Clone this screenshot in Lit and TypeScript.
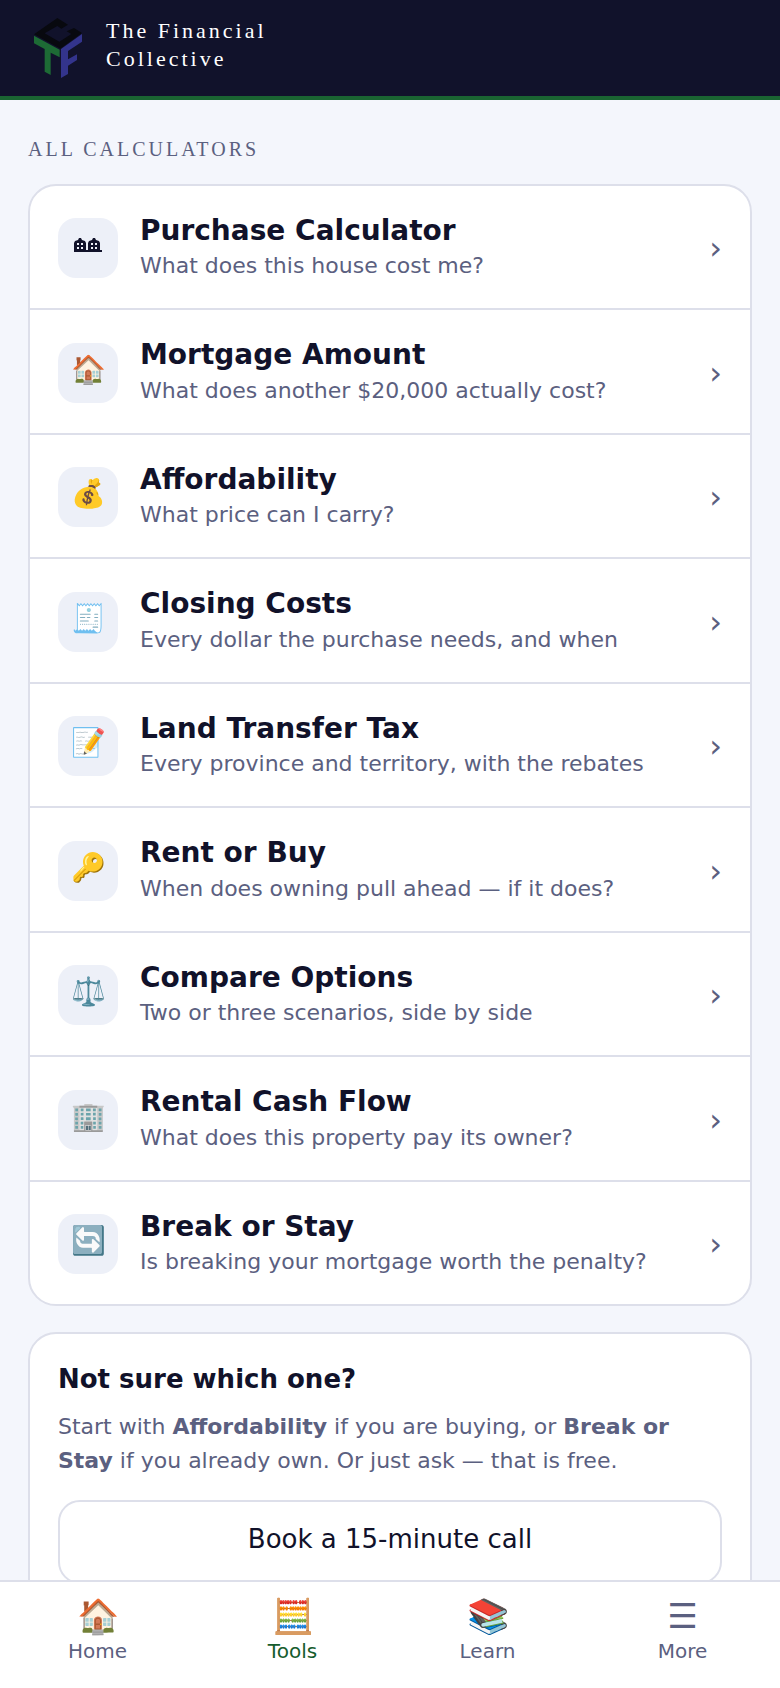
import { LitElement, html, css, nothing } from "lit";
import { customElement } from "lit/decorators.js";

interface Calculator { icon: unknown; title: string; note: string; }

const houses = html`
  <svg class="houses" viewBox="0 0 28 14">
    <path fill="currentColor" fill-rule="evenodd" d="M0 14V5L1 3L4 2L5 0H7L8 2L11 3L12 5V12H14V5L15 3L18 2L19 0H21L22 2L25 3L26 5V12H28V14ZM3 5V7H5V5ZM7 5V7H9V5ZM3 9V11H5V9ZM7 9V11H9V9ZM17 5V7H19V5ZM21 5V7H23V5ZM17 9V11H19V9ZM21 9V11H23V9Z" />
  </svg>`;

const CALCULATORS: Calculator[] = [
  { icon: houses, title: "Purchase Calculator", note: "What does this house cost me?" },
  { icon: "🏠", title: "Mortgage Amount", note: "What does another $20,000 actually cost?" },
  { icon: "💰", title: "Affordability", note: "What price can I carry?" },
  { icon: "🧾", title: "Closing Costs", note: "Every dollar the purchase needs, and when" },
  { icon: "📝", title: "Land Transfer Tax", note: "Every province and territory, with the rebates" },
  { icon: "🔑", title: "Rent or Buy", note: "When does owning pull ahead — if it does?" },
  { icon: "⚖️", title: "Compare Options", note: "Two or three scenarios, side by side" },
  { icon: "🏢", title: "Rental Cash Flow", note: "What does this property pay its owner?" },
  { icon: "🔄", title: "Break or Stay", note: "Is breaking your mortgage worth the penalty?" },
];

const TABS = [
  { icon: "🏠", label: "Home", current: false },
  { icon: "🧮", label: "Tools", current: true },
  { icon: "📚", label: "Learn", current: false },
  { icon: "☰", label: "More", current: false },
];

@customElement("app-root")
export class AppRoot extends LitElement {
  static styles = css`
    :host {
      display: block;
      min-height: 100vh;
      background: #f4f6fc;
      color: #11122a;
      font-family: "DejaVu Sans", sans-serif;
      --line: #dddfea;
      --muted: #5b6080;
      --green: #1a6432;
    }
    * { box-sizing: border-box; }
    a { color: inherit; text-decoration: none; }
    .header {
      display: flex;
      align-items: center;
      gap: 22px;
      height: 100px;
      padding: 0 28px;
      background: #11122b;
      border-bottom: 4px solid var(--green);
    }
    .logo { width: 56px; height: 66px; }
    .brand {
      width: 200px;
      padding-bottom: 6px;
      color: #fff;
      font: 22px/28px "Liberation Serif", serif;
      letter-spacing: 3px;
    }
    .main { padding: 35px 28px 160px; }
    .heading {
      margin: 0 0 21px;
      color: var(--muted);
      font: 20px/28px "Liberation Serif", serif;
      letter-spacing: 3px;
      text-transform: uppercase;
    }
    .card {
      background: #fff;
      border: 2px solid var(--line);
      border-radius: 28px;
    }
    .list { margin: 0 0 26px; padding: 0; list-style: none; overflow: hidden; }
    .item + .item { border-top: 2px solid var(--line); }
    .row {
      display: flex;
      align-items: center;
      gap: 22px;
      padding: 27px 28px 25px;
    }
    .icon {
      display: grid;
      place-items: center;
      flex: none;
      width: 60px;
      height: 60px;
      padding-bottom: 6px;
      border-radius: 18px;
      background: #edf0f8;
      font-size: 28px;
      line-height: 40px;
    }
    .houses { width: 28px; height: 14px; }
    .text { flex: 1; display: grid; }
    .title { font-size: 28px; font-weight: 700; line-height: 1.3; }
    .note { color: var(--muted); font-size: 22px; line-height: 1.55; }
    .chevron { color: var(--muted); font-size: 32px; line-height: 40px; }
    .help { padding: 26px 28px; }
    .question { margin: 0 0 12px; font-size: 26px; line-height: 38px; }
    .answer { margin: 0 0 22px; color: var(--muted); font-size: 22px; line-height: 34px; }
    .call {
      width: 100%;
      height: 84px;
      padding: 0 0 6px;
      border: 2px solid var(--line);
      border-radius: 22px;
      background: #fff;
      color: inherit;
      font: inherit;
      font-size: 26px;
    }
    .tabs {
      position: fixed;
      inset: auto 0 0 0;
      display: grid;
      grid-template-columns: repeat(4, 1fr);
      height: 108px;
      padding: 13px 0;
      background: #fff;
      border-top: 2px solid var(--line);
    }
    .tab {
      display: grid;
      justify-items: center;
      align-content: start;
      color: var(--muted);
      font-size: 20px;
      line-height: 28px;
    }
    .tab[aria-current] { color: #155c2d; }
    .glyph { font-size: 34px; line-height: 42px; }
  `;

  render() {
    return html`
      <header class="header">
        <svg class="logo" viewBox="84 45 168 198" aria-hidden="true">
          <path fill="#08090f" d="M172 54L204 74 184 86 172 78 134 100 178 125 214 102 200 94 222 84 246 99 181 146 102 103Z" />
          <path fill="#1d6b35" d="M102 107L179 149V172L152 158V225L134 215V147L102 130Z" />
          <path fill="#33348c" d="M246 102L183 147V234L204 222V197L231 180V163L204 178V153L246 125Z" />
        </svg>
        <div class="brand">The Financial Collective</div>
      </header>
      <main class="main">
        <h1 class="heading">All calculators</h1>
        <ul class="card list">
          ${CALCULATORS.map((c) => html`
            <li class="item">
              <a class="row" href="#">
                <span class="icon" aria-hidden="true">${c.icon}</span>
                <span class="text">
                  <span class="title">${c.title}</span>
                  <span class="note">${c.note}</span>
                </span>
                <span class="chevron" aria-hidden="true">›</span>
              </a>
            </li>`)}
        </ul>
        <section class="card help">
          <h2 class="question">Not sure which one?</h2>
          <p class="answer">
            Start with <strong>Affordability</strong> if you are buying, or
            <strong>Break or Stay</strong> if you already own. Or just ask — that is free.
          </p>
          <button class="call" type="button">Book a 15-minute call</button>
        </section>
      </main>
      <nav class="tabs">
        ${TABS.map((t) => html`
          <a class="tab" href="#" aria-current=${t.current ? "page" : nothing}>
            <span class="glyph" aria-hidden="true">${t.icon}</span>
            <span>${t.label}</span>
          </a>`)}
      </nav>
    `;
  }
}
